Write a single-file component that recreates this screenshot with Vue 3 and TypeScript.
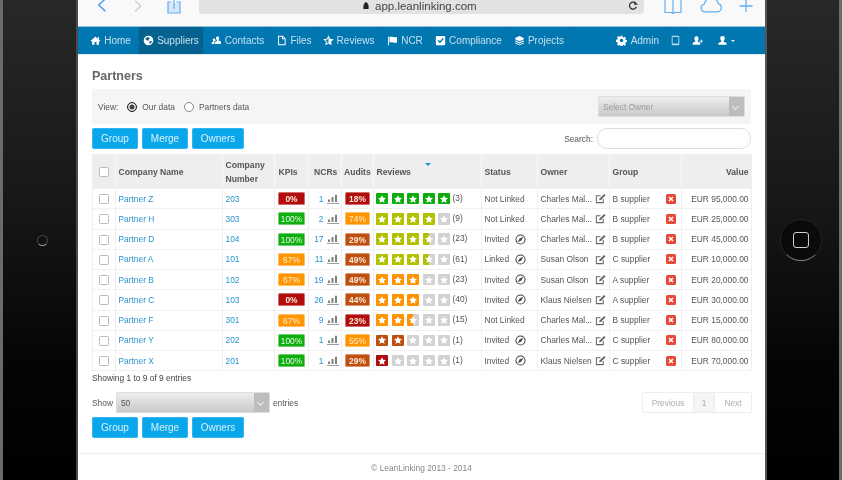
<script setup lang="ts">
interface NavItem { label: string; icon: string }
interface Row {
  name: string; num: string; kpi: number; ncr: number; audit: number; rating: number; count: number;
  status: string; owner: string; group: string; value: string
}

const icons: Record<string, string> = {
  home: 'M8 2 1 8.500l1 1L3 8.600V14h3.600v-4h2.800v4H13V8.600l1 .9 1-1-2-1.900V3h-2v2.700z',
  globe: 'M8 1a7 7 0 1 0 0 14A7 7 0 0 0 8 1zM3.200 5.400 6 3.400l3 .2 1 1.600-2 1.200.6 1.600H6L4 6.600zM9 9.400l3-.6 1 .6-1.600 3-1.800.4z',
  contacts: 'M9.500 2a2.400 2.400 0 0 1 2.400 2.700c0 1-.4 1.800-1 2.300v1l3.600 1.500V13H5.500v-2.500L8.500 9V7.200c-.7-.6-1.300-1.500-1.300-2.500A2.400 2.400 0 0 1 9.500 2zM4.500 5a1.900 1.900 0 0 1 1.700 1c0 .9.300 1.700.900 2.400v.1L4.500 9.800V13H1v-2.200L3.300 9.500V8.300C2.800 7.800 2.600 7.100 2.600 6.500 2.600 5.700 3.400 5 4.500 5z',
  file: 'M3 1h7l4 4v10H3zM4.400 2.400v11.200h8.200V6.200H8.800V2.400zM10.200 2.900v2h2z',
  star: 'M8 .5l2.400 5 5.600.7-4.100 3.800 1.100 5.500L8 12.800 3 15.500l1.100-5.500L0 6.200l5.600-.7z',
  reviews: 'M8 .5l2.300 4.900 5.300.7-3.900 3.600 1 5.300L8 12.400 3.300 15l1-5.300L.4 6.100l5.300-.7zM8 3.700 6.600 6.700l-3.200.4 2.400 2.200-.6 3.200L8 10.900z',
  flag: 'M1.500 2h1.300v13H1.500zM3.600 3c3.500-1.800 6.400 1.400 11 0v8c-4.600 1.400-7.500-1.800-11 0z',
  check: 'M3 1.500h10A1.800 1.800 0 0 1 14.800 3.300v9.900A1.800 1.800 0 0 1 13 15H3a1.800 1.800 0 0 1-1.800-1.800V3.300A1.800 1.800 0 0 1 3 1.500zM3.800 8.300l3.400 3.700 5.600-6.600-1.500-1.300-4.200 4.900-2-2.100z',
  projects: 'M8 1.500l6.300 2.700v2L8 9 1.700 6.200v-2zM1.700 7.600 8 10.400l6.300-2.800v2L8 12.400 1.700 9.600zM1.700 11 8 13.800l6.300-2.800v1.300L8 15 1.700 12.300z',
  gear: 'M6.800 1h2.400l.4 2 1.500.6 1.700-1.100 1.700 1.700-1.100 1.700.6 1.500 2 .4v2.400l-2 .4-.6 1.500 1.100 1.700-1.700 1.700-1.700-1.100-1.500.6-.4 2H6.800l-.4-2-1.500-.6-1.700 1.100-1.700-1.700 1.100-1.700-.6-1.500-2-.4V6.800l2-.4.6-1.500L1.500 3.200l1.700-1.700 1.700 1.100 1.500-.6zM8 5.500a2.500 2.500 0 1 0 0 5 2.500 2.500 0 0 0 0-5z',
  tablet: 'M4 1h8a1.500 1.500 0 0 1 1.500 1.500v11A1.500 1.500 0 0 1 12 15H4a1.500 1.500 0 0 1-1.500-1.500v-11A1.500 1.500 0 0 1 4 1zM3.800 2.800v9.400h8.400V2.800z',
  userplus: 'M6.500 2a3 3 0 0 1 3 3.300c0 1.200-.5 2.300-1.300 2.900v1.300L12 11.200V14H1v-2.800l3.800-1.700V8.200C4 7.600 3.500 6.500 3.500 5.300A3 3 0 0 1 6.500 2zM12.800 6.500h1.100v2H16v1.100h-2.100v2h-1.100v-2h-2V8.500h2z',
  user: 'M8 1.500a3.200 3.200 0 0 1 3.200 3.600c0 1.300-.6 2.500-1.400 3.100v1.500l4.200 1.800V14H2v-2.500l4.200-1.800V8.200C5.400 7.600 4.800 6.400 4.800 5.100A3.200 3.200 0 0 1 8 1.500z'
}

const navLeft: NavItem[] = [
  { label: 'Home', icon: 'home' },
  { label: 'Suppliers', icon: 'globe' },
  { label: 'Contacts', icon: 'contacts' },
  { label: 'Files', icon: 'file' },
  { label: 'Reviews', icon: 'reviews' },
  { label: 'NCR', icon: 'flag' },
  { label: 'Compliance', icon: 'check' },
  { label: 'Projects', icon: 'projects' }
]

const rows: Row[] = [
  { name: 'Partner Z', num: '203', kpi: 0, ncr: 1, audit: 18, rating: 5, count: 3, status: 'Not Linked', owner: 'Charles Mal...', group: 'B supplier', value: 'EUR 95,000.00' },
  { name: 'Partner H', num: '303', kpi: 100, ncr: 2, audit: 74, rating: 4, count: 9, status: 'Not Linked', owner: 'Charles Mal...', group: 'B supplier', value: 'EUR 25,000.00' },
  { name: 'Partner D', num: '104', kpi: 100, ncr: 17, audit: 29, rating: 3.5, count: 23, status: 'Invited', owner: 'Charles Mal...', group: 'B supplier', value: 'EUR 45,000.00' },
  { name: 'Partner A', num: '101', kpi: 67, ncr: 11, audit: 49, rating: 3.5, count: 61, status: 'Linked', owner: 'Susan Olson', group: 'C supplier', value: 'EUR 10,000.00' },
  { name: 'Partner B', num: '102', kpi: 67, ncr: 19, audit: 49, rating: 3, count: 23, status: 'Invited', owner: 'Susan Olson', group: 'A supplier', value: 'EUR 20,000.00' },
  { name: 'Partner C', num: '103', kpi: 0, ncr: 26, audit: 44, rating: 3, count: 40, status: 'Invited', owner: 'Klaus Nielsen', group: 'A supplier', value: 'EUR 30,000.00' },
  { name: 'Partner F', num: '301', kpi: 67, ncr: 9, audit: 23, rating: 2.5, count: 15, status: 'Not Linked', owner: 'Charles Mal...', group: 'B supplier', value: 'EUR 15,000.00' },
  { name: 'Partner Y', num: '202', kpi: 100, ncr: 1, audit: 55, rating: 2, count: 1, status: 'Invited', owner: 'Charles Mal...', group: 'C supplier', value: 'EUR 80,000.00' },
  { name: 'Partner X', num: '201', kpi: 100, ncr: 1, audit: 29, rating: 1, count: 1, status: 'Invited', owner: 'Klaus Nielsen', group: 'C supplier', value: 'EUR 70,000.00' }
]

function badgeClass(v: number): string {
  if (v >= 90) return 'b-green'
  if (v >= 50) return 'b-orange'
  if (v >= 25) return 'b-rust'
  return 'b-red'
}

function starColor(r: number): string {
  if (r >= 5) return '#0bad0b'
  if (r >= 3.5) return '#b3c000'
  if (r >= 2.5) return '#ff9400'
  if (r >= 2) return '#bf4f0e'
  return '#b00c0c'
}

function starStyle(r: number, i: number): { background: string } {
  const f = Math.max(0, Math.min(1, r - i)) * 100
  const c = starColor(r)
  return { background: `linear-gradient(90deg, ${c} ${f}%, #d2d2d2 ${f}%)` }
}

const buttons = ['Group', 'Merge', 'Owners']
</script>

<template>
  <div class="device">
    <div class="bezel bezel-left"><span class="camera"></span></div>

    <div class="screen">
      <header class="toolbar">
        <svg class="tb-back" viewBox="0 0 10 16" width="10" height="15"><path d="M8.500 1 1.500 7.500l7 6.500" fill="none" stroke="#3f9ff2" stroke-width="1.500" /></svg>
        <svg class="tb-forward" viewBox="0 0 10 16" width="8" height="13"><path d="M1.500 1l7 6.500-7 6.500" fill="none" stroke="#c9c9c9" stroke-width="1.500" /></svg>
        <svg class="tb-share" viewBox="0 0 14 14" width="14" height="14"><path d="M4.500 2H1v11h12V2H9.500M7 9V-3" fill="none" stroke="#62aff2" stroke-width="1.200" /><rect x="1" y="3" width="12" height="10" fill="#3f9ff2" opacity=".18" /></svg>
        <div class="urlbar">
          <svg class="lock" viewBox="0 0 8 9" width="6" height="7"><path d="M1 4h6v5H1zM2 4V2.500a2 2 0 0 1 4 0V4" fill="#222" stroke="#222" stroke-width=".8" /></svg>
          <span class="url">app.leanlinking.com</span>
          <svg class="reload" viewBox="0 0 12 12" width="10" height="10"><path d="M9.500 3.200A4.200 4.200 0 1 0 10 7" fill="none" stroke="#333" stroke-width="1.500" /><path d="M7.500 0v4.500H12z" fill="#333" /></svg>
        </div>
        <svg class="tb-book" viewBox="0 0 18 14" width="18" height="14"><path d="M1 0v12.500h6.500L9 13.500l1.500-1H17V0M9 0v13" fill="none" stroke="#62aff2" stroke-width="1.200" /></svg>
        <svg class="tb-cloud" viewBox="0 0 25 13" width="25" height="13"><path d="M6 11.800H19.500a4.200 4.200 0 0 0 .8-8.200C19 -1 15-3 11.500-2 8.500-1 7 1 6.500 4A4 4 0 0 0 6 11.800z" fill="none" stroke="#62aff2" stroke-width="1.200" /></svg>
        <svg class="tb-plus" viewBox="0 0 14 13" width="14" height="13"><path d="M7 0v12M.5 6h13" fill="none" stroke="#62aff2" stroke-width="1.300" /></svg>
      </header>

      <nav class="nav">
        <div class="nav-left">
          <a v-for="(item, i) in navLeft" :key="item.label" class="nav-item" :class="{ active: i === 1 }">
            <svg class="nav-icon" viewBox="0 0 16 16"><path :d="icons[item.icon]" fill-rule="evenodd" /></svg>
            <span>{{ item.label }}</span>
          </a>
        </div>
        <div class="nav-right">
          <a class="nr-admin">
            <svg class="nav-icon" viewBox="0 0 16 16"><path :d="icons.gear" fill-rule="evenodd" /></svg>
            <span>Admin</span>
          </a>
          <a class="nr-tablet"><svg class="nav-icon" viewBox="0 0 16 16"><path :d="icons.tablet" fill-rule="evenodd" /></svg></a>
          <a class="nr-plus"><svg class="nav-icon" viewBox="0 0 16 16"><path :d="icons.userplus" fill-rule="evenodd" /></svg></a>
          <a class="nr-user">
            <svg class="nav-icon" viewBox="0 0 16 16"><path :d="icons.user" fill-rule="evenodd" /></svg>
            <i class="caret"></i>
          </a>
        </div>
      </nav>

      <main class="main">
        <h1 class="title">Partners</h1>

        <div class="well">
          <span class="view-label">View:</span>
          <span class="radio radio-on"></span><span class="radio-text">Our data</span>
          <span class="radio"></span><span class="radio-text">Partners data</span>
          <div class="select owner-select"><span>Select Owner</span><i class="sel-arrow"></i></div>
        </div>

        <div class="actions">
          <button v-for="b in buttons" :key="b" class="btn">{{ b }}</button>
          <label class="search-label">Search:</label>
          <div class="search"></div>
        </div>

        <table class="grid">
          <colgroup>
            <col class="c-check" /><col class="c-name" /><col class="c-num" /><col class="c-kpi" />
            <col class="c-ncr" /><col class="c-audit" /><col class="c-rev" /><col class="c-status" />
            <col class="c-owner" /><col class="c-group" /><col class="c-value" />
          </colgroup>
          <thead>
            <tr>
              <th><span class="cb"></span></th>
              <th>Company Name</th>
              <th>Company<br />Number</th>
              <th class="kpi-head">KPIs</th>
              <th class="ncr-head">NCRs</th>
              <th class="audit-head">Audits</th>
              <th class="rev-head">Reviews<i class="sort"></i></th>
              <th>Status</th>
              <th>Owner</th>
              <th>Group</th>
              <th class="right">Value</th>
            </tr>
          </thead>
          <tbody>
            <tr v-for="r in rows" :key="r.name">
              <td class="center"><span class="cb"></span></td>
              <td class="link">{{ r.name }}</td>
              <td class="link">{{ r.num }}</td>
              <td class="badge-cell"><span class="badge" :class="badgeClass(r.kpi)">{{ r.kpi }}%</span></td>
              <td>
                <span class="ncr">
                  <span class="link">{{ r.ncr }}</span>
                  <svg viewBox="0 0 12 10" width="12" height="10"><path d="M0 9.200h12v.8H0zM1 8V5.500h2V8zM4.500 8V3h2v5zM8 8V0.800h2V8z" fill="#808080" /></svg>
                </span>
              </td>
              <td class="badge-cell"><span class="badge" :class="badgeClass(r.audit)">{{ r.audit }}%</span></td>
              <td class="rev">
                <span v-for="i in 5" :key="i" class="star" :style="starStyle(r.rating, i - 1)">
                  <svg viewBox="0 0 16 16" width="8" height="8"><path :d="icons.star" fill="#fff" /></svg>
                </span>
                <span class="count">({{ r.count }})</span>
              </td>
              <td>
                <span class="status">
                  <span class="status-text">{{ r.status }}</span>
                  <svg v-if="r.status !== 'Not Linked'" viewBox="0 0 12 12" width="11" height="11">
                    <circle cx="6" cy="6" r="5" fill="none" stroke="#444" stroke-width="1.100" />
                    <path d="M9 3 5 5 3 9l4-2z" fill="#444" />
                  </svg>
                </span>
              </td>
              <td>
                <span class="owner">
                  <span>{{ r.owner }}</span>
                  <svg viewBox="0 0 12 12" width="11" height="11">
                    <path d="M9 6.500V10.500H1.500V3H6" fill="none" stroke="#666" stroke-width="1.100" />
                    <path d="M4.500 8 5 6 10 1l1.500 1.500-5 5z" fill="#666" />
                  </svg>
                </span>
              </td>
              <td>
                <span class="groupcell">
                  <span>{{ r.group }}</span>
                  <svg viewBox="0 0 10 10" width="10" height="10">
                    <rect width="10" height="10" rx="1.500" fill="#e8483a" />
                    <path d="M3 3l4 4M7 3 3 7" stroke="#fff" stroke-width="1.500" />
                  </svg>
                </span>
              </td>
              <td class="right">{{ r.value }}</td>
            </tr>
          </tbody>
        </table>

        <p class="info">Showing 1 to 9 of 9 entries</p>

        <div class="pager-row">
          <span>Show</span>
          <div class="select len-select"><span>50</span><i class="sel-arrow"></i></div>
          <span>entries</span>
          <div class="pager">
            <span class="pg pg-prev">Previous</span>
            <span class="pg pg-cur">1</span>
            <span class="pg pg-next">Next</span>
          </div>
        </div>

        <div class="actions actions-bottom">
          <button v-for="b in buttons" :key="b" class="btn">{{ b }}</button>
        </div>
      </main>

      <footer class="footer">© LeanLinking 2013 - 2014</footer>
    </div>

    <div class="bezel bezel-right">
      <span class="home"><i class="home-square"></i></span>
    </div>
  </div>
</template>

<style>
html, body { margin: 0; background: #000; overflow: hidden; }
</style>

<style scoped>
.device {
  width: 842px;
  height: 480px;
  display: flex;
  overflow: hidden;
  font-family: "Liberation Sans", Arial, sans-serif;
  font-size: 8.4px;
  color: #555;
}
.bezel {
  display: flex;
  align-items: center;
  justify-content: center;
  background: linear-gradient(180deg, #282828 0%, #161616 45%, #050505 75%, #000 100%);
  filter: blur(.4px);
}
.bezel-left { width: 78px; flex: none; border-left: 3px solid #6b6b6b; border-right: 2px solid #4a4a4a; box-sizing: border-box; }
.bezel-right { width: 77px; flex: none; border-left: 2px solid #555; border-right: 3px solid #6b6b6b; box-sizing: border-box; }
.camera {
  width: 11px; height: 11px; border-radius: 50%;
  border: 1.500px solid #444; border-bottom-color: #999; box-sizing: border-box; background: #111;
  margin-left: 5px;
}
.home {
  width: 42px; height: 42px; border-radius: 50%; box-sizing: border-box;
  border: 1.500px solid #232323; border-bottom-color: #808080; background: #0a0a0a;
  display: flex; align-items: center; justify-content: center; margin-right: 4px;
}
.home-square { width: 14px; height: 14px; border: 1.500px solid #cfcfcf; border-radius: 3px; }

.screen {
  width: 687px;
  flex: none;
  background: #fff;
  display: flex;
  flex-direction: column;
  filter: blur(.6px);
}

.toolbar {
  height: 27px;
  flex: none;
  box-sizing: border-box;
  background: #f9f9f9;
  display: flex;
  align-items: flex-start;
  overflow: hidden;
  border-bottom: 1px solid #8cc2dd;
}
.tb-back { margin: -2px 0 0 19px; }
.tb-forward { margin: 0 0 0 27px; }
.tb-share { margin: 0 0 0 25px; }
.urlbar {
  width: 445px;
  height: 14px;
  margin-left: 18px;
  background: #e2e2e2;
  border-radius: 0 0 3px 3px;
  display: flex;
  align-items: center;
  box-sizing: border-box;
}
.lock { margin: -3px 0 0 164px; }
.url { margin: -3px 0 0 6px; font-size: 11.500px; color: #444; line-height: 10px; }
.reload { margin: -3px 6px 0 auto; }
.tb-book { margin-left: 20px; }
.tb-cloud { margin-left: 16px; }
.tb-plus { margin-left: 16px; }

.nav {
  height: 28px;
  flex: none;
  background: #0077b0;
  display: flex;
  justify-content: space-between;
  color: #c4e0ef;
  font-size: 10px;
  border-bottom: 1px solid #dfeaf0;
  box-sizing: border-box;
}
.nav-left {
  display: grid;
  grid-template-columns: 61px 65px 68px 45px 64px 49px 78px 63px;
}
.nav-item {
  display: flex;
  align-items: center;
  justify-content: center;
  gap: 3px;
  border-right: 1px solid #0a6fa4;
}
.nav-item:first-child { padding-left: 5px; }
.nav-item.active { background: #05628f; }
.nav-icon { width: 11px; height: 11px; fill: #fff; flex: none; }
.nav-right { display: flex; align-items: stretch; }
.nav-right a { display: flex; align-items: center; }
.nr-admin { gap: 4px; padding-right: 5px; border-right: 1px solid #0a6fa4; }
.nr-tablet { padding: 0 5px; border-right: 1px solid #0a6fa4; }
.nr-tablet .nav-icon { fill: #b6d8ea; }
.nr-plus { padding: 0 8px 0 5px; }
.nr-user { padding: 0 30px 0 6px; gap: 3px; }
.caret { width: 0; height: 0; border: 2.500px solid transparent; border-top-color: #e8f3f9; border-bottom: 0; }

.main {
  flex: none;
  padding: 0 14px;
  display: flex;
  flex-direction: column;
}
.title {
  margin: 14px 0 6px;
  font-size: 12.500px;
  line-height: 14px;
  font-weight: bold;
  color: #666;
}
.well {
  height: 35px;
  background: #f5f5f5;
  display: flex;
  align-items: center;
  padding: 0 6px;
  color: #555;
}
.view-label { margin-right: 9px; }
.radio {
  width: 8px; height: 8px; border-radius: 50%;
  border: 1px solid #888; background: #fff; margin-right: 5px;
}
.radio-on { background: #444; box-shadow: inset 0 0 0 1.500px #eee; border-color: #222; }
.radio-text { margin-right: 9px; }
.select {
  height: 21px;
  box-sizing: border-box;
  background: linear-gradient(180deg, #ededed, #c9c9c9);
  border: 1px solid #ddd;
  border-radius: 1px;
  display: flex;
  align-items: center;
  padding-left: 4px;
  color: #888;
}
.owner-select { width: 147px; margin-left: auto; color: #999; }
.len-select { width: 154px; margin: 0 3px; color: #555; }
.sel-arrow {
  margin-left: auto;
  width: 15px;
  height: 100%;
  background: #bdbdbd;
  position: relative;
}
.sel-arrow::after {
  content: "";
  position: absolute;
  left: 4px; top: 7px;
  width: 4px; height: 4px;
  border-right: 1px solid #eee;
  border-bottom: 1px solid #eee;
  transform: rotate(45deg);
}
.actions {
  display: flex;
  align-items: center;
  gap: 4px;
  margin-top: 4px;
  height: 21px;
}
.btn {
  height: 21px;
  padding: 0;
  width: 46px;
  border: 1px solid #32b4f2;
  border-radius: 1.500px;
  background: #0aa6ea;
  color: #d8f1fc;
  font: 10px "Liberation Sans", Arial, sans-serif;
}
.btn:last-of-type { width: 52px; }
.search-label { margin-left: auto; }
.search {
  width: 154px;
  height: 21px;
  box-sizing: border-box;
  border: 1px solid #ddd;
  border-radius: 10px;
  background: #fff;
}

.grid {
  width: 659px;
  margin-top: 5px;
  table-layout: fixed;
  border-collapse: collapse;
  border: 1px solid #eee;
}
.c-check { width: 23px; }
.c-name { width: 107px; }
.c-num { width: 52px; }
.c-kpi { width: 34px; }
.c-ncr { width: 33px; }
.c-audit { width: 32px; }
.c-rev { width: 108px; }
.c-status { width: 56px; }
.c-owner { width: 72px; }
.c-group { width: 72px; }
.c-value { width: 70px; }
th {
  height: 33px;
  padding: 0 2.500px;
  background: #eeeeee;
  text-align: left;
  font-weight: bold;
  font-size: 8.600px;
  line-height: 14px;
  border-right: 1px solid #f8f8f8;
  color: #555;
  overflow: hidden;
  white-space: nowrap;
}
th:first-child { text-align: center; }
th.right { text-align: right; border-right: 0; }
.kpi-head { padding-left: 3.500px; }
.ncr-head { padding-left: 5px; padding-right: 0; }
.audit-head { padding-left: 2px; padding-right: 0; }
.rev-head { position: relative; padding-left: 2.500px; }
.sort {
  position: absolute;
  left: 51px; top: 8px;
  width: 0; height: 0;
  border: 3px solid transparent;
  border-top-color: #1f8fd0;
  border-bottom: 0;
}
td {
  height: 19.250px;
  padding: 0 2.500px;
  border: 1px solid #f0f0f0;
  white-space: nowrap;
  overflow: hidden;
}
.center { text-align: center; }
.right { text-align: right; }
.cb {
  display: inline-block;
  width: 8px; height: 8px;
  border: 1px solid #bbb;
  border-radius: 1.500px;
  background: #fff;
  vertical-align: middle;
}
.link { color: #2a93cf; }
.badge-cell { padding: 0 3px 0 3px; }
.badge {
  display: block;
  height: 13px;
  line-height: 12px;
  border-radius: 1.500px;
  text-align: center;
  color: #fbe9d8;
  font-weight: bold;
  box-sizing: border-box;
  border: .5px solid rgba(255, 255, 255, .4);
}
.b-red { background: #b10d0d; }
.b-green { background: #0fae0f; font-weight: normal; color: #e7f8e7; }
.b-orange { background: #ff9500; font-weight: normal; color: #ffeed0; }
.b-rust { background: #bf4f0e; }
.ncr { display: flex; align-items: center; justify-content: flex-end; gap: 3px; }
.rev { padding: 0 0 0 2px; }
.star {
  display: inline-flex;
  align-items: center;
  justify-content: center;
  width: 12px;
  height: 11.500px;
  margin-right: 3.500px;
  vertical-align: middle;
  border-radius: 1px;
}
.count { margin-left: -1px; color: #555; }
.status { display: flex; align-items: center; }
.status-text { min-width: 30px; }
.owner { display: flex; align-items: center; justify-content: space-between; padding-right: 1px; }
.groupcell { display: flex; align-items: center; justify-content: space-between; padding-right: 3px; }
.info { margin: 2px 0 0; height: 10px; line-height: 10px; color: #444; }
.pager-row {
  display: flex;
  align-items: center;
  margin-top: 9px;
  color: #555;
}
.pager {
  margin: 0 -1px 0 auto;
  display: flex;
  height: 21px;
  border: 1px solid #eee;
  border-radius: 2px;
  box-sizing: border-box;
  color: #aaa;
}
.pg { display: flex; align-items: center; justify-content: center; }
.pg-prev { width: 50px; }
.pg-cur { width: 20px; background: #f5f5f5; border: solid #eee; border-width: 0 1px; }
.pg-next { width: 36px; }
.actions-bottom { margin-top: 4px; }
.footer {
  margin-top: 15px;
  border-top: 1px solid #eee;
  padding-top: 9px;
  text-align: center;
  color: #888;
  line-height: 10px;
}
</style>
